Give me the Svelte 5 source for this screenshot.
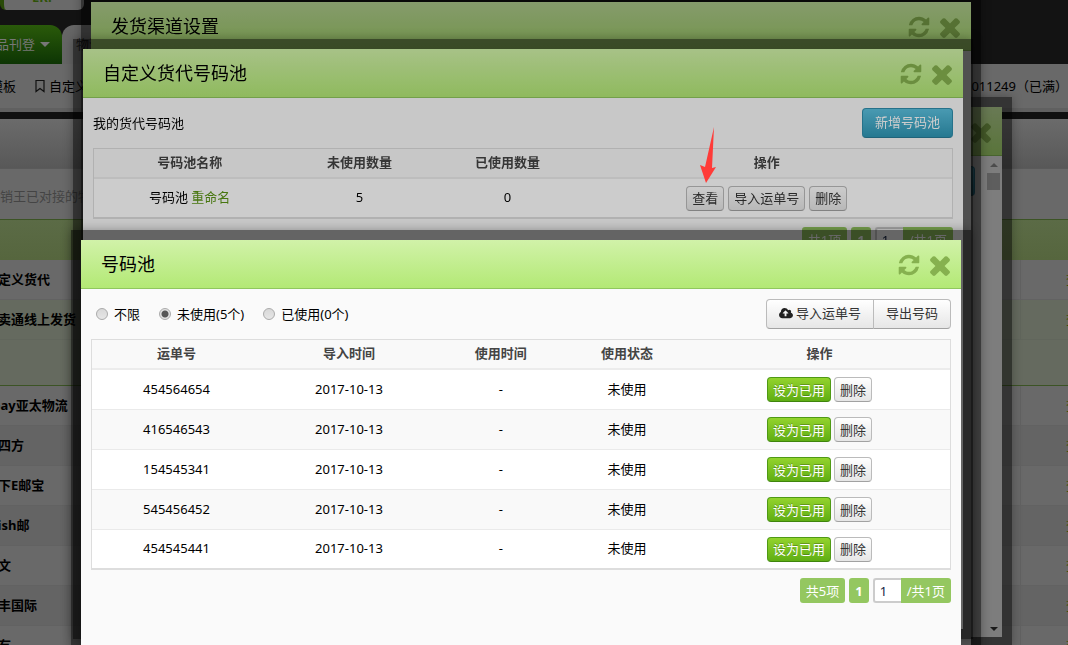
<script>
    // Modal "未使用(5个)" filter and paging state
    let filter = "unused";
    let page = "1";
    let poolPage = "1";

    const filters = [
        { id: "all", label: "不限" },
        { id: "unused", label: "未使用(5个)" },
        { id: "used", label: "已使用(0个)" }
    ];

    let numbers = [
        { code: "454564654", imported: "2017-10-13", usedAt: "-", status: "未使用" },
        { code: "416546543", imported: "2017-10-13", usedAt: "-", status: "未使用" },
        { code: "154545341", imported: "2017-10-13", usedAt: "-", status: "未使用" },
        { code: "545456452", imported: "2017-10-13", usedAt: "-", status: "未使用" },
        { code: "454545441", imported: "2017-10-13", usedAt: "-", status: "未使用" }
    ];

    const channels = [
        { name: "自定义货代" },
        { name: "速卖通线上发货", open: true },
        { name: "", open: true, last: true },
        { name: "Ebay亚太物流" },
        { name: "递四方", even: true },
        { name: "线下E邮宝" },
        { name: "Wish邮", even: true },
        { name: "燕文" },
        { name: "顺丰国际", even: true },
        { name: "万有" }
    ];
</script>

{#snippet windowHead(title)}
    <header class="window-head">
        <h2>{title}</h2>
        <button class="icon-btn" aria-label="刷新">
            <svg width="24" height="24" viewBox="0 0 1792 1792"><path d="M1639 1056q0 5-1 7-64 268-268 434.5t-478 166.5q-146 0-282.5-55t-243.5-157l-129 129q-19 19-45 19t-45-19-19-45v-448q0-26 19-45t45-19h448q26 0 45 19t19 45-19 45l-137 137q71 66 161 102t187 36q134 0 250-65t186-179q11-17 53-117 8-23 30-23h192q13 0 22.5 9.5t9.5 22.5zm25-800v448q0 26-19 45t-45 19h-448q-26 0-45-19t-19-45 19-45l138-138q-148-137-349-137-134 0-250 65t-186 179q-11 17-53 117-8 23-30 23h-199q-13 0-22.5-9.5t-9.5-22.5v-7q65-268 270-434.5t480-166.5q146 0 284 55.5t245 156.5l130-129q19-19 45-19t45 19 19 45z"/></svg>
        </button>
        <button class="icon-btn" aria-label="关闭">
            <svg width="30" height="30" viewBox="0 0 1792 1792"><path d="M1490 1322q0 40-28 68l-136 136q-28 28-68 28t-68-28l-294-294-294 294q-28 28-68 28t-68-28l-136-136q-28-28-28-68t28-68l294-294-294-294q-28-28-28-68t28-68l136-136q28-28 68-28t68 28l294 294 294-294q28-28 68-28t68 28l136 136q28 28 28 68t-28 68l-294 294 294 294q28 28 28 68z"/></svg>
        </button>
    </header>
{/snippet}

<div class="desktop">
    <div class="page">
        <div class="topbar">
            <div class="logo">ERP</div>
            <nav class="tabs">
                <a class="tab" href="#publish">品刊登 <span class="caret"></span></a>
                <a class="tab current" href="#logistics">物流</a>
            </nav>
        </div>
        <div class="subnav">
            <a href="#template">模板</a>
            <a href="#custom">
                <svg width="12" height="14" viewBox="0 0 12 14"><path d="M2 1.5h8v11l-4-3-4 3z" fill="none" stroke="#111" stroke-width="1.2"/></svg>
                自定义
            </a>
            <span class="account">011249（已满）</span>
        </div>
        <div class="panel-head"></div>
        <div class="panel-note">销王已对接的物流</div>
        <table class="channels">
            <colgroup><col><col class="col-action"></colgroup>
            <thead><tr><th></th><th></th></tr></thead>
            <tbody>
                {#each channels as c}
                    <tr class:open={c.open} class:last={c.last} class:even={c.even}>
                        <td>{c.name}</td>
                        <td>{#if c.name}<a href="#channel">查看</a>{/if}</td>
                    </tr>
                {/each}
            </tbody>
        </table>
    </div>

    <section class="window channel-list">
        <div class="window-inner">
            {@render windowHead("")}
            <div class="scroll-area">
                <div class="window-body">
                    <div class="toolbar end"><button class="btn blue add" aria-label="新增"></button></div>
                </div>
                <div class="scrollbar">
                    <span class="arrow-up"></span>
                    <span class="thumb"></span>
                    <span class="arrow-down"></span>
                </div>
            </div>
        </div>
    </section>

    <section class="window channel-config">
        <div class="window-inner">
            {@render windowHead("发货渠道设置")}
        </div>
    </section>

    <section class="window pools">
        <div class="window-inner">
            {@render windowHead("自定义货代号码池")}
            <div class="window-body">
                <div class="toolbar">
                    <span>我的货代号码池</span>
                    <button class="btn blue">新增号码池</button>
                </div>
                <table class="grid pool-grid">
                    <thead>
                        <tr><th>号码池名称</th><th>未使用数量</th><th>已使用数量</th><th>操作</th></tr>
                    </thead>
                    <tbody>
                        <tr>
                            <td>号码池 <a href="#rename">重命名</a></td>
                            <td>5</td>
                            <td>0</td>
                            <td>
                                <div class="actions">
                                    <button class="btn small">查看</button>
                                    <button class="btn small">导入运单号</button>
                                    <button class="btn small">删除</button>
                                </div>
                            </td>
                        </tr>
                    </tbody>
                </table>
                <div class="pager">
                    <span class="chip">共1项</span>
                    <button class="chip num">1</button>
                    <label class="goto"><input type="text" aria-label="页码" bind:value={poolPage}><span>/共1页</span></label>
                </div>
            </div>
        </div>
    </section>

    <!-- points at the 查看 button -->
    <svg class="pointer" width="18" height="58" viewBox="0 0 18 58"><path d="M15 1L13 42L17 41L7 57L1 39L6 41Z" fill="#ff3b38"/></svg>

    <section class="window numbers">
        <div class="window-inner">
            {@render windowHead("号码池")}
            <div class="window-body">
                <div class="toolbar">
                    <div class="filters">
                        {#each filters as f}
                            <label><input type="radio" name="filter" value={f.id} bind:group={filter}>{f.label}</label>
                        {/each}
                    </div>
                    <div class="btn-group">
                        <button class="btn">
                            <svg width="14" height="13" viewBox="0 0 1920 1792"><path d="M1280 864q0-14-9-23l-352-352q-9-9-23-9t-23 9l-351 351q-10 12-10 24 0 14 9 23t23 9h224v352q0 13 9.5 22.5t22.5 9.5h192q13 0 22.5-9.5t9.5-22.5v-352h224q13 0 22.5-9.5t9.5-22.5zm640 288q0 159-112.5 271.5t-271.5 112.5h-1088q-185 0-316.5-131.5t-131.5-316.5q0-130 70-240t188-165q-2-30-2-43 0-212 150-362t362-150q156 0 285.5 87t188.5 231q71-62 166-62 106 0 181 75t75 181q0 76-41 138 130 31 213.5 135.5t83.5 238.5z"/></svg>
                            导入运单号
                        </button>
                        <button class="btn">导出号码</button>
                    </div>
                </div>
                <table class="grid number-grid">
                    <thead>
                        <tr><th>运单号</th><th>导入时间</th><th>使用时间</th><th>使用状态</th><th>操作</th></tr>
                    </thead>
                    <tbody>
                        {#each numbers as n}
                            <tr>
                                <td>{n.code}</td>
                                <td>{n.imported}</td>
                                <td>{n.usedAt}</td>
                                <td>{n.status}</td>
                                <td>
                                    <div class="actions">
                                        <button class="btn small green">设为已用</button>
                                        <button class="btn small">删除</button>
                                    </div>
                                </td>
                            </tr>
                        {/each}
                    </tbody>
                </table>
                <div class="pager">
                    <span class="chip">共5项</span>
                    <button class="chip num">1</button>
                    <label class="goto"><input type="text" aria-label="页码" bind:value={page}><span>/共1页</span></label>
                </div>
            </div>
        </div>
    </section>
</div>

<style>
    :global(body) { margin: 0; background: #131313; }

    .desktop {
        position: relative;
        height: 100vh;
        overflow: hidden;
        font: 13px/20px "Noto Sans", "Noto Sans CJK SC", sans-serif;
        color: #000;
    }
    .desktop * { box-sizing: border-box; }
    button, input { font: inherit; margin: 0; }
    a { text-decoration: none; color: inherit; }

    /* Page behind the windows */
    .topbar {
        height: 64px;
        background: #131313;
        display: flex;
        flex-direction: column;
        justify-content: space-between;
    }
    .logo {
        width: 84px;
        height: 14px;
        margin-top: -4px;
        border-left: 4px solid #294a08;
        border-radius: 0 0 6px 6px;
        background: #6a6a6a;
        color: #2f5208;
        font-weight: bold;
        line-height: 2px;
        text-align: center;
    }
    .tabs { display: flex; height: 39px; }
    .tab {
        width: 62px;
        border-radius: 0 12px 0 0;
        background: linear-gradient(#2a5a0a, #0d3504);
        color: #777;
        line-height: 39px;
        display: flex;
        align-items: center;
        gap: 5px;
        white-space: nowrap;
    }
    .tab:first-child { margin-left: -4px; width: 66px; }
    .tab.current { width: 90px; padding-left: 14px; border-radius: 12px 12px 0 0; background: #666; color: #222; }
    .caret { border: 5px solid transparent; border-top-color: #777; border-bottom: 0; }
    .subnav {
        display: flex;
        align-items: center;
        gap: 18px;
        height: 48px;
        margin-left: -10px;
        background: #696969;
        border-bottom: 4px solid #606060;
    }
    .subnav a { display: flex; align-items: center; gap: 3px; }
    .account { margin-left: auto; font-family: "Noto Sans", "Noto Sans CJK TC", sans-serif; }
    .panel-head {
        height: 57px;
        border-top: 7px solid #101010;
        border-bottom: 1px solid #5a5a5a;
        background: linear-gradient(#6b6b6b, #585858);
    }
    .panel-note { height: 50px; line-height: 54px; background: #696969; color: #444; }
    .channels {
        width: calc(100% + 40px);
        margin-left: -15px;
        border-spacing: 0;
        table-layout: fixed;
        background: #696969;
        font-weight: bold;
    }
    .col-action { width: 73px; }
    .channels th { height: 41px; padding: 0; border-top: 1px solid #3c5425; background: linear-gradient(#5b6b46, #56663e); }
    .channels td { height: 40px; padding: 0 0 2px; border-bottom: 1px solid #626262; }
    .channels td + td { padding-left: 45px; border-left: 1px solid #626262; font-weight: normal; color: #3c4f00; }
    .channels .even td { background: #646464; }
    .channels .open td { background: #656a5f; border-color: #61665c; }
    .channels .last td { height: 46px; border-bottom-color: #3c5425; border-left: 0; }

    /* Windows */
    .window {
        position: absolute;
        border: 10px solid rgba(0, 0, 0, 0.5);
        box-shadow: 0 0 10px rgba(0, 0, 0, 0.3);
    }
    .window-inner { min-height: 580px; background: #fafafa; display: flex; flex-direction: column; }
    .channel-list { left: 112px; right: 56px; top: 97px; }
    .channel-list .window-inner { min-height: 530px; filter: brightness(0.5); }
    .channel-config { left: 81px; right: 87px; top: -8px; }
    .channel-config .window-inner { min-height: 650px; filter: brightness(0.64); }
    .pools { left: 73px; right: 95px; top: 39px; }
    .pools .window-inner { filter: brightness(0.8); }
    .numbers { left: 71px; right: 97px; top: 230px; }

    .window-head {
        display: flex;
        align-items: center;
        gap: 4px;
        height: 49px;
        padding: 0 6px 0 20px;
        border-bottom: 1px solid #90c75e;
        background: linear-gradient(#d1f2a9, #b3e975);
    }
    .window-head h2 { margin: 0 auto 0 0; font-size: 18px; font-weight: normal; line-height: 28px; }
    .icon-btn { display: flex; padding: 2px 0 0; border: 0; background: none; cursor: pointer; }
    .icon-btn svg { fill: #86b14f; }
    .window-body { flex: 1; padding: 10px; }

    .toolbar { display: flex; justify-content: space-between; align-items: center; height: 30px; margin-bottom: 10px; }
    .toolbar.end { justify-content: flex-end; }
    .filters { display: flex; gap: 19px; padding-left: 5px; }
    .filters label { display: flex; align-items: center; gap: 6px; }
    .filters input {
        appearance: none;
        width: 12px;
        height: 12px;
        border: 1px solid #aaa;
        border-radius: 50%;
        background: linear-gradient(#d8d8d8, #e6e6e6);
    }
    .filters input:checked { background: radial-gradient(#555 3px, #e2e2e2 4px); }

    .btn {
        display: inline-flex;
        align-items: center;
        gap: 3px;
        height: 30px;
        padding: 0 12px 2px;
        border: 1px solid #bbb;
        border-bottom-color: #a2a2a2;
        border-radius: 4px;
        background: linear-gradient(#fff, #e6e6e6);
        color: #333;
        line-height: 18px;
        white-space: nowrap;
        cursor: pointer;
    }
    .btn.small { height: 25px; padding: 0 5px; }
    .btn.add { width: 91px; }
    .btn.blue { border-color: #2f8fad #2f8fad #287c97; background: linear-gradient(#5bc0de, #2f96b4); color: #fff; }
    .btn.green { border-color: #4f9a14 #4f9a14 #3f850c; background: linear-gradient(#93d32c, #5fae14); color: #fff; text-shadow: 0 -1px 0 rgba(0, 0, 0, 0.25); }
    .btn-group { display: flex; }
    .btn-group .btn:first-child { border-radius: 4px 0 0 4px; }
    .btn-group .btn + .btn { margin-left: -1px; border-radius: 0 4px 4px 0; }
    .btn svg { fill: #222; }

    .grid {
        width: 100%;
        border: 1px solid #ddd;
        border-bottom-width: 2px;
        border-spacing: 0;
        table-layout: fixed;
        text-align: center;
    }
    .grid th { height: 30px; padding: 0 0 2px; border-bottom: 2px solid #ececec; background: #f9f9f9; color: #444; }
    .grid td { height: 40px; padding: 0 0 2px; border-bottom: 1px solid #eaeaea; background: #fff; }
    .grid td:last-child { padding-bottom: 0; }
    .grid tr:nth-child(even) td { background: #f9f9f9; }
    .grid tr:last-child td { height: 38px; border-bottom: 0; }
    .grid a { color: #5a9414; }
    .number-grid th:nth-child(1) { width: 19.7%; }
    .number-grid th:nth-child(2) { width: 20.5%; }
    .number-grid th:nth-child(3) { width: 14.9%; }
    .number-grid th:nth-child(4) { width: 14.5%; }
    .pool-grid th:nth-child(1) { width: 22.3%; }
    .pool-grid th:nth-child(2) { width: 17.3%; }
    .pool-grid th:nth-child(3) { width: 17.2%; }
    .actions { display: flex; justify-content: center; gap: 3px; }
    .pool-grid .actions { gap: 4px; }

    .pager { display: flex; justify-content: flex-end; gap: 4px; margin-top: 8px; }
    .chip, .goto span {
        height: 25px;
        padding: 0 6px;
        border: 0;
        border-radius: 3px;
        background: #94c760;
        color: #fff;
        line-height: 26px;
    }
    .chip.num { font-weight: bold; }
    .goto { display: flex; }
    .goto span { border-radius: 0 3px 3px 0; }
    .goto input {
        width: 28px;
        height: 25px;
        padding: 0 5px;
        border: 2px solid #ccc;
        border-right-width: 0;
        border-radius: 3px 0 0 3px;
        background: #fff;
        color: #124;
    }

    .scroll-area { flex: 1; display: flex; }
    .scrollbar { display: flex; flex-direction: column; align-items: center; width: 17px; padding: 7px 0 6px; }
    .arrow-up { border: 4px solid transparent; border-bottom-color: #999; border-top: 0; }
    .arrow-down { margin-top: auto; border: 4px solid transparent; border-top-color: #333; border-bottom: 0; }
    .thumb { width: 13px; height: 17px; margin-top: 6px; background: #bcbcbc; }

    .pointer { position: absolute; left: 699px; top: 126px; }
</style>
